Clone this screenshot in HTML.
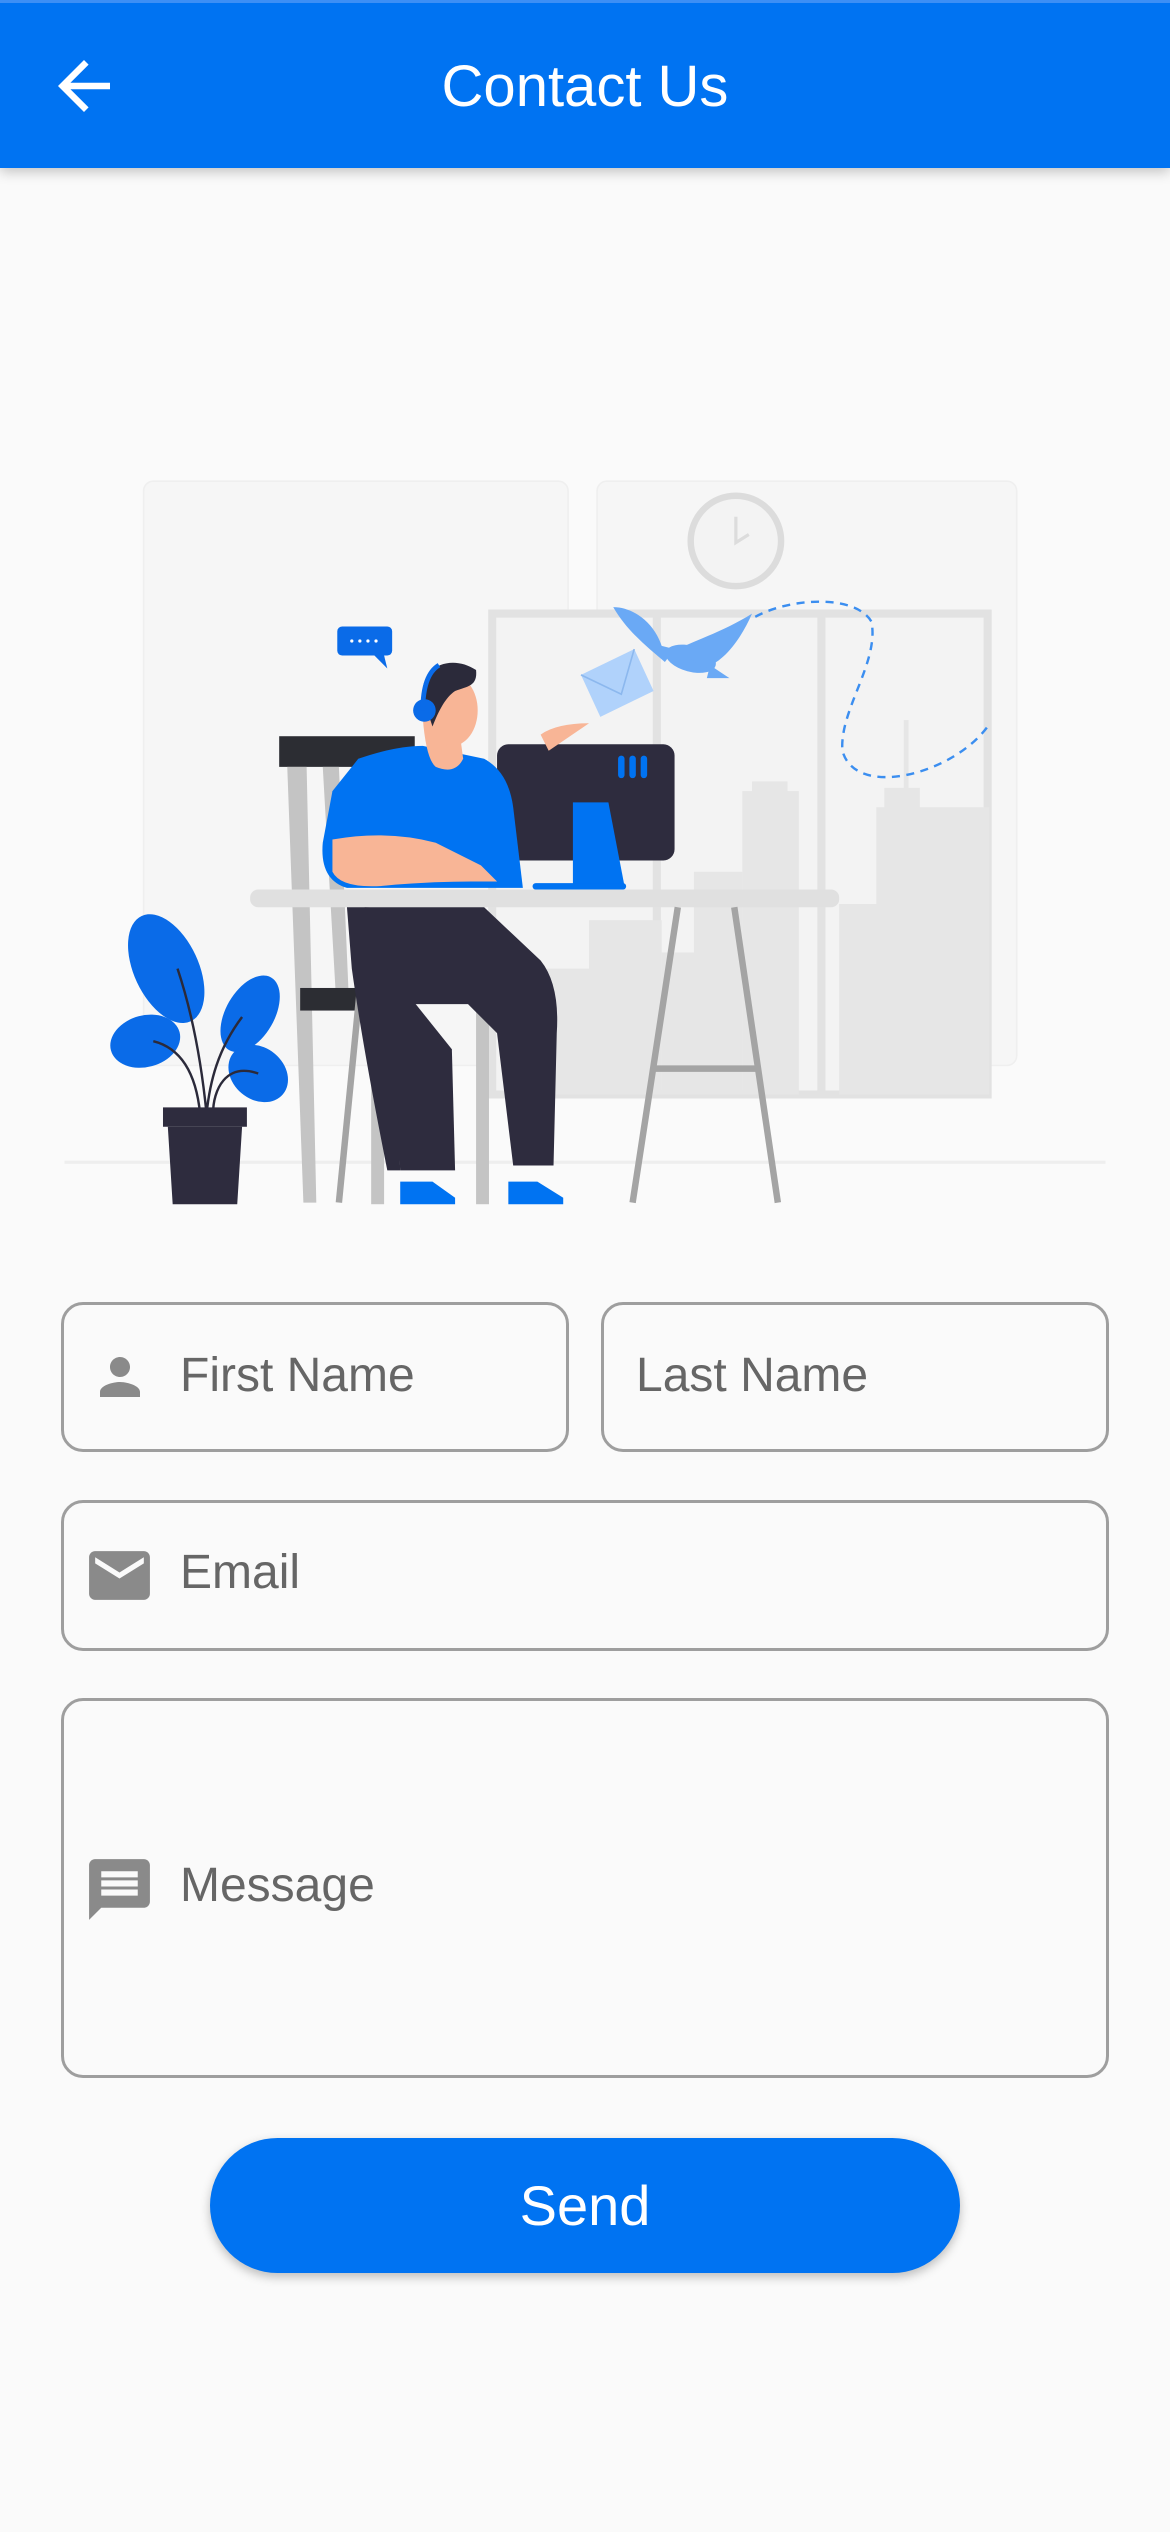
<!DOCTYPE html>
<html><head><meta charset="utf-8">
<style>
*{margin:0;padding:0;box-sizing:border-box}
body{width:1170px;height:2532px;background:#fafafa;font-family:"Liberation Sans",Roboto,sans-serif;position:relative;overflow:hidden}
.hdr{position:absolute;left:0;top:0;width:1170px;height:168px;background:#0073f2;box-shadow:0 4px 12px rgba(0,0,0,.22);border-top:3px solid #3d8ff5}
.hdr .t{position:absolute;left:0;right:0;top:50px;text-align:center;color:#fff;font-size:58px;line-height:68px}
.box{position:absolute;border:3px solid #9e9e9e;border-radius:22px}
.lbl{position:absolute;color:#666;font-size:48px;line-height:56px}
.btn{position:absolute;left:210px;top:2138px;width:750px;height:135px;border-radius:68px;background:#0073f2;color:#fff;font-size:56px;text-align:center;line-height:135px;box-shadow:0 4px 10px rgba(0,0,0,.25)}
</style></head><body>
<div class="hdr">
<svg style="position:absolute;left:45px;top:44px" width="78" height="78" viewBox="0 0 24 24"><path d="M20 11H7.83l5.59-5.59L12 4l-8 8 8 8 1.41-1.41L7.83 13H20v-2z" fill="#fff"/></svg>
<div class="t">Contact Us</div>
</div>

<svg style="position:absolute;left:0;top:452px" width="1170" height="775" viewBox="0 280 725 480">
<rect x="89" y="298" width="263" height="362" rx="6" fill="#f6f6f6" stroke="#efefef"/>
<rect x="370" y="298" width="260" height="362" rx="6" fill="#f6f6f6" stroke="#efefef"/>
<circle cx="456" cy="335" r="28" fill="#f3f3f3" stroke="#dcdcdc" stroke-width="4"/>
<path d="M456 320v16l8-5" stroke="#dcdcdc" stroke-width="2" fill="none"/>
<rect x="305" y="380" width="307" height="298" fill="#f3f3f3" stroke="#e2e2e2" stroke-width="5"/>
<line x1="407" y1="380" x2="407" y2="678" stroke="#e2e2e2" stroke-width="5"/>
<line x1="509" y1="380" x2="509" y2="678" stroke="#e2e2e2" stroke-width="5"/>
<g fill="#e6e6e6">
<rect x="460" y="490" width="35" height="188"/><rect x="466" y="484" width="22" height="8"/>
<rect x="543" y="500" width="70" height="178"/><rect x="560" y="446" width="3" height="54"/><rect x="548" y="488" width="22" height="14"/>
<rect x="520" y="560" width="25" height="118"/>
<rect x="365" y="570" width="45" height="108"/><rect x="410" y="590" width="40" height="88"/>
<rect x="330" y="600" width="35" height="78"/><rect x="430" y="540" width="30" height="138"/>
</g>
<line x1="40" y1="720" x2="685" y2="720" stroke="#eeeeee" stroke-width="2"/>
<path d="M468 382 C490 370 530 368 540 385 C545 410 520 440 522 465 C530 495 590 480 612 450" fill="none" stroke="#3b8ef0" stroke-width="1.5" stroke-dasharray="5 4"/>
<g fill="#6aa9f5">
<path d="M380 376 C392 376 405 385 410 400 L418 402 L412 410 C400 400 388 390 380 376Z"/>
<ellipse cx="428" cy="408" rx="16" ry="8" transform="rotate(15 428 408)"/>
<path d="M420 402 C435 395 450 390 466 380 C458 398 448 410 436 414Z"/>
<path d="M440 412 L452 420 L438 420Z"/>
</g>
<path d="M360 418 L393 402 L405 428 L372 444Z" fill="#b0d2fb"/>
<path d="M360 418 L385 430 L393 402" stroke="#8cb8ee" fill="none" stroke-width="1"/>
<rect x="209" y="388" width="34" height="18" rx="3" fill="#0a6be8"/>
<path d="M232 406l8 8-2-8z" fill="#0a6be8"/>
<g fill="#fff"><circle cx="218" cy="397" r="1"/><circle cx="223" cy="397" r="1"/><circle cx="228" cy="397" r="1"/><circle cx="233" cy="397" r="1"/></g>
<rect x="173" y="456" width="84" height="19" fill="#2c2d33"/>
<path d="M178 475l10 270h8l-6-270z M200 475l8 140h8l-6-140z" fill="#c4c4c4"/>
<rect x="186" y="612" width="60" height="14" fill="#2c2d33"/>
<rect x="230" y="626" width="8" height="120" fill="#c4c4c4"/>
<rect x="295" y="626" width="8" height="120" fill="#c4c4c4"/>
<rect x="155" y="551" width="365" height="11" rx="5" fill="#e0e0e0"/>
<path d="M420 562L392 745M455 562L482 745" stroke="#a4a4a4" stroke-width="4"/>
<line x1="405" y1="662" x2="470" y2="662" stroke="#a4a4a4" stroke-width="4"/>
<path d="M228 562L210 745" stroke="#a4a4a4" stroke-width="4"/>
<rect x="308" y="461" width="110" height="72" rx="7" fill="#2e2c3e"/>
<g fill="#0073f2"><rect x="383" y="468" width="4" height="14" rx="2"/><rect x="390" y="468" width="4" height="14" rx="2"/><rect x="397" y="468" width="4" height="14" rx="2"/></g>
<path d="M355 497h22l10 52h-32z" fill="#0073f2"/>
<rect x="330" y="547" width="58" height="4" rx="2" fill="#0073f2"/>
<path d="M215 562H300L335 595Q347 610 345 640L343 722H318L308 640L290 622H250Q242 640 245 660L248 725H240Q225 650 218 600Z" fill="#2e2c3e"/>
<path d="M240 600 L280 650 L282 725 L248 725 L242 640Z" fill="#2e2c3e"/>
<path d="M222 470Q245 462 262 462L300 470Q315 478 318 500L324 550H215Q198 545 200 522L206 490Z" fill="#0073f2"/>
<path d="M262 445 Q264 470 270 475 Q282 480 287 470 L285 455Z" fill="#f8b596"/>
<ellipse cx="280" cy="440" rx="16" ry="22" fill="#f8b596"/>
<path d="M262 432 C260 412 280 405 295 415 C296 425 290 425 282 428 C276 432 272 440 268 450 Z" fill="#2b2a3a"/>
<circle cx="263" cy="440" r="7" fill="#0a6be8"/>
<path d="M262 440 Q262 418 272 412" stroke="#0a6be8" stroke-width="3" fill="none"/>
<path d="M206 520Q240 514 270 522L298 536L308 546L292 546Q270 546 245 548Q212 552 206 540Z" fill="#f8b596"/>
<path d="M335 455 Q345 448 365 448 L340 465Z" fill="#f8b596"/>
<path d="M248 732h20l14 10v4h-34z M315 732h18l16 10v4h-34z" fill="#0073f2"/>
<g fill="#0a6be8">
<ellipse cx="103" cy="600" rx="20" ry="36" transform="rotate(-25 103 600)"/>
<ellipse cx="155" cy="628" rx="15" ry="26" transform="rotate(30 155 628)"/>
<ellipse cx="90" cy="645" rx="22" ry="16" transform="rotate(-15 90 645)"/>
<ellipse cx="160" cy="665" rx="20" ry="16" transform="rotate(40 160 665)"/>
</g>
<path d="M110 600C120 630 125 660 128 690M150 630C135 650 130 670 128 690M95 645C115 650 122 670 124 690M160 665C140 658 132 675 132 690" stroke="#2b2a3a" stroke-width="1.5" fill="none"/>
<rect x="101" y="686" width="52" height="12" fill="#2e2c3e"/>
<path d="M104 698h46l-3 48h-40z" fill="#2e2c3e"/>
</svg>

<div class="box" style="left:61px;top:1302px;width:508px;height:150px"></div>
<svg style="position:absolute;left:90px;top:1347px" width="60" height="60" viewBox="0 0 24 24"><path d="M12 12c2.21 0 4-1.790 4-4s-1.79-4-4-4-4 1.79-4 4 1.79 4 4 4zm0 2c-2.67 0-8 1.34-8 4v2h16v-2c0-2.660-5.33-4-8-4z" fill="#8a8a8a"/></svg>
<div class="lbl" style="left:180px;top:1348px">First Name</div>
<div class="box" style="left:601px;top:1302px;width:508px;height:150px"></div>
<div class="lbl" style="left:636px;top:1348px">Last Name</div>

<div class="box" style="left:61px;top:1500px;width:1048px;height:151px"></div>
<svg style="position:absolute;left:83px;top:1539px" width="73" height="73" viewBox="0 0 24 24"><path d="M20 4H4c-1.1 0-2 .9-2 2v12c0 1.1.9 2 2 2h16c1.1 0 2-.9 2-2V6c0-1.1-.9-2-2-2zm0 4l-8 5-8-5V6l8 5 8-5v2z" fill="#8a8a8a"/></svg>
<div class="lbl" style="left:180px;top:1545px">Email</div>

<div class="box" style="left:61px;top:1698px;width:1048px;height:380px"></div>
<svg style="position:absolute;left:83px;top:1853px" width="73" height="73" viewBox="0 0 24 24"><path d="M20 2H4c-1.1 0-2 .9-2 2v18l4-4h14c1.1 0 2-.9 2-2V4c0-1.1-.9-2-2-2zM6 9h12v2H6V9zm12 5H6v-2h12v2zm0-6H6V6h12v2z" fill="#8a8a8a"/></svg>
<div class="lbl" style="left:180px;top:1858px">Message</div>

<div class="btn">Send</div>
</body></html>
